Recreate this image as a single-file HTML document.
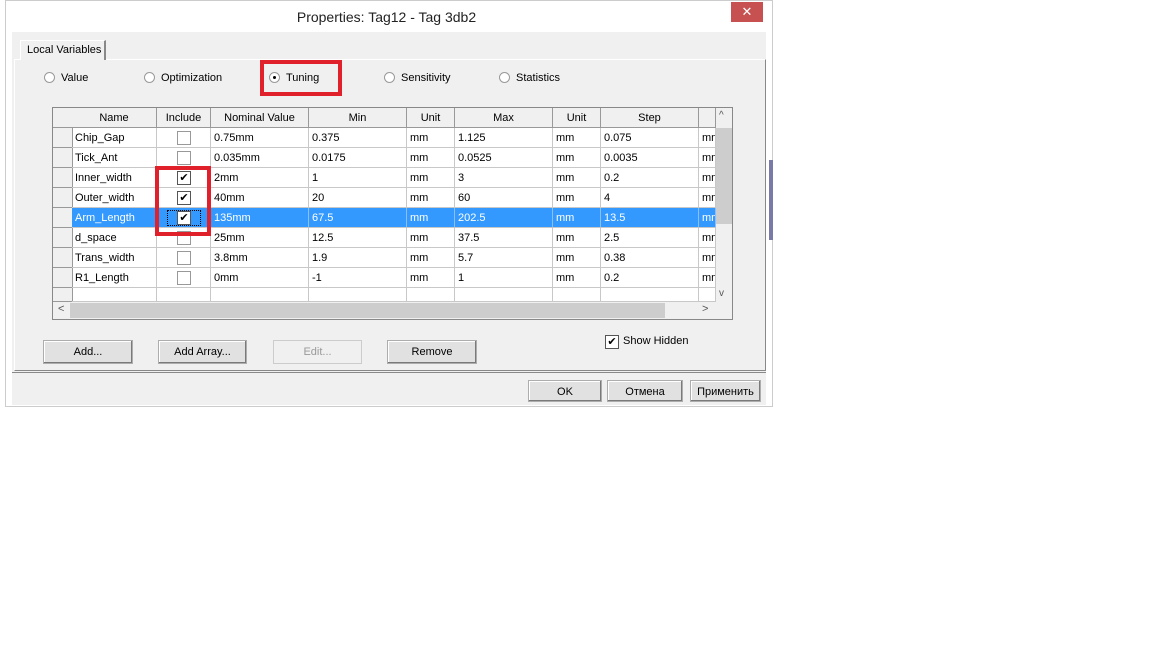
<html><head><style>
body{margin:0;width:1152px;height:648px;background:#fff;font-family:"Liberation Sans",sans-serif;font-size:11px;color:#000;position:relative;overflow:hidden}
.a{position:absolute}
.btn{position:absolute;height:22px;background:#e1e1e1;border:1px solid #adadad;box-shadow:inset -1px -1px 0 #7a7a7a,inset 1px 1px 0 #fff;text-align:center;line-height:22px;box-sizing:border-box}
.rad{position:absolute;width:9px;height:9px;border:1px solid #999;border-radius:50%;background:#fff}
.cell{position:absolute;height:20px;line-height:20px;border-right:1px solid #c8c8c8;border-bottom:1px solid #c8c8c8;box-sizing:border-box;padding-left:3px;white-space:nowrap;overflow:hidden}
.hd{background:#f0f0f0;text-align:center;padding:0;border-right:1px solid #999;border-bottom:1px solid #999}
.cb{position:absolute;width:14px;height:14px;border:1px solid #999;background:#fff;box-sizing:border-box;font-size:11px;line-height:12px;text-align:center}
</style></head><body>
<div class="a" style="left:5px;top:0;width:768px;height:407px;border:1px solid #ccc;background:#fff;box-sizing:border-box"></div>
<div class="a" style="left:0;top:9px;width:773px;text-align:center;font-size:14px;color:#222">Properties: Tag12 - Tag 3db2</div>
<div class="a" style="left:731px;top:2px;width:32px;height:20px;background:#c75050;color:#fff;text-align:center;line-height:20px;font-size:13px">✕</div>
<div class="a" style="left:12px;top:32px;width:754px;height:341px;background:#f0f0f0"></div>
<div class="a" style="left:12px;top:372px;width:754px;height:1px;background:#888"></div>
<div class="a" style="left:12px;top:373px;width:754px;height:32px;background:#f0f0f0"></div>
<div class="a" style="left:14px;top:59px;width:750px;height:310px;border:1px solid #fff;border-right-color:#888;border-bottom-color:#888"></div>
<div class="a" style="left:20px;top:40px;width:86px;height:20px;border:1px solid #fff;border-right:2px solid #888;border-bottom:none;background:#f0f0f0;line-height:18px;padding-left:6px;box-sizing:border-box">Local Variables</div>
<div class="rad" style="left:44px;top:72px"></div><div class="a" style="left:61px;top:72px">Value</div>
<div class="rad" style="left:144px;top:72px"></div><div class="a" style="left:161px;top:72px">Optimization</div>
<div class="rad" style="left:269px;top:72px"><div class="a" style="left:3px;top:3px;width:3px;height:3px;background:#000;border-radius:50%"></div></div><div class="a" style="left:286px;top:72px">Tuning</div>
<div class="a" style="left:260px;top:60px;width:82px;height:36px;border:4px solid #e0202b;box-sizing:border-box"></div>
<div class="rad" style="left:384px;top:72px"></div><div class="a" style="left:401px;top:72px">Sensitivity</div>
<div class="rad" style="left:499px;top:72px"></div><div class="a" style="left:516px;top:72px">Statistics</div>
<div class="a" style="left:52px;top:107px;width:681px;height:213px;border:1px solid #888;background:#fff;box-sizing:border-box"></div>
<div id="g"></div>
<div class="a" style="left:716px;top:108px;width:16px;height:194px;background:#f0f0f0"></div>
<div class="a" style="left:716px;top:128px;width:16px;height:96px;background:#cdcdcd"></div>
<div class="a" style="left:719px;top:110px;font-size:10px;color:#555">^</div>
<div class="a" style="left:719px;top:288px;font-size:10px;color:#555">v</div>
<div class="a" style="left:53px;top:302px;width:679px;height:17px;background:#f0f0f0"></div>
<div class="a" style="left:70px;top:303px;width:595px;height:15px;background:#cdcdcd"></div>
<div class="a" style="left:58px;top:303px;color:#555">&lt;</div>
<div class="a" style="left:702px;top:303px;color:#555">&gt;</div>
<div class="a" style="left:155px;top:166px;width:56px;height:70px;border:4px solid #e0202b;box-sizing:border-box"></div>
<div class="btn" style="left:43px;top:340px;width:90px;height:24px;line-height:22px">Add...</div>
<div class="btn" style="left:158px;top:340px;width:89px;height:24px;line-height:22px">Add Array...</div>
<div class="btn" style="left:273px;top:340px;width:89px;height:24px;line-height:22px;color:#999;background:#f0f0f0;border-color:#ccc;box-shadow:none">Edit...</div>
<div class="btn" style="left:387px;top:340px;width:90px;height:24px;line-height:22px">Remove</div>
<div class="cb" style="left:605px;top:335px;border-color:#555">✔</div>
<div class="a" style="left:623px;top:335px">Show Hidden</div>
<div class="btn" style="left:528px;top:380px;width:74px">OK</div>
<div class="btn" style="left:607px;top:380px;width:76px">Отмена</div>
<div class="btn" style="left:690px;top:380px;width:71px">Применить</div>
<div class="a" style="left:769px;top:160px;width:4px;height:80px;background:#7a7aa8"></div>
<script>
var cols=[[53,20],[72,85],[157,54],[211,98],[309,98],[407,48],[455,98],[553,48],[601,98],[699,17]];
var hd=["","Name","Include","Nominal Value","Min","Unit","Max","Unit","Step",""];
var rows=[["Chip_Gap",0,"0.75mm","0.375","1.125","0.075"],["Tick_Ant",0,"0.035mm","0.0175","0.0525","0.0035"],["Inner_width",1,"2mm","1","3","0.2"],["Outer_width",1,"40mm","20","60","4"],["Arm_Length",1,"135mm","67.5","202.5","13.5"],["d_space",0,"25mm","12.5","37.5","2.5"],["Trans_width",0,"3.8mm","1.9","5.7","0.38"],["R1_Length",0,"0mm","-1","1","0.2"]];
var h="";
cols.forEach(function(c,i){h+='<div class="cell hd" style="left:'+c[0]+'px;top:108px;width:'+c[1]+'px">'+hd[i]+'</div>'});
rows.concat([["",2,"","","",""]]).forEach(function(r,j){
 var y=128+j*20,sel=j==4,ht=j==8?14:20;
 var v=["",r[0],"",r[2],r[3],"mm",r[4],"mm",r[5],"mm"];if(j==8){v[5]=v[7]=v[9]="";}
 cols.forEach(function(c,i){
  var st='left:'+c[0]+'px;top:'+y+'px;width:'+c[1]+'px;height:'+ht+'px;';
  if(i==0)st+='background:#f0f0f0;border-right-color:#999;border-bottom-color:#999;';
  else if(sel)st+='background:#3399ff;color:#fff;border-right-color:#8cc0f5;';
  h+='<div class="cell" style="'+st+'">'+v[i]+'</div>';
 });
 if(r[1]<2){var x=177,yy=y+3;
  h+='<div class="cb" style="left:'+x+'px;top:'+yy+'px;'+(r[1]?'border-color:#555':'')+'">'+(r[1]?'✔':'')+'</div>';
  if(sel)h+='<div class="a" style="left:'+(x-10)+'px;top:'+(y+2)+'px;width:34px;height:16px;border:1px dotted #000;box-sizing:border-box"></div>';}
});
document.getElementById("g").innerHTML=h;
</script>
</body></html>
